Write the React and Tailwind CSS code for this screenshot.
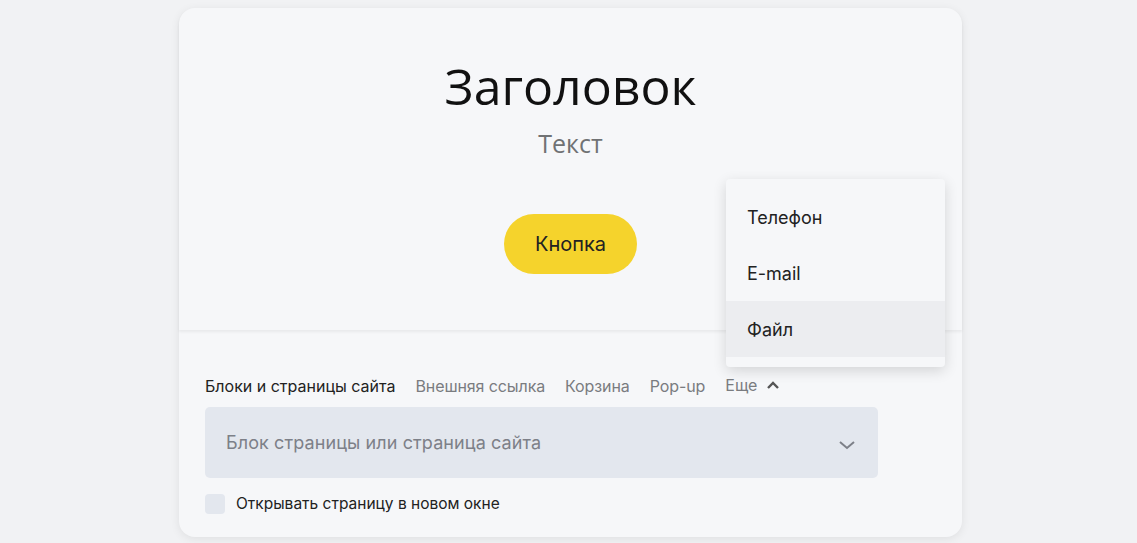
import React from 'react';

const tabs = ['Внешняя ссылка', 'Корзина', 'Pop-up'];
const menu = ['Телефон', 'E-mail', 'Файл'];

export default function App() {
  return (
    <div className="min-h-[543px] w-full bg-[#f1f2f4] pt-[8px] font-['Inter',sans-serif]">
      <div className="relative ml-[179px] w-[783px] rounded-[16px] bg-[#f6f7f9] shadow-[0_2px_10px_rgba(0,0,0,0.08)]">
        {/* preview */}
        <div className="flex h-[322px] flex-col items-center rounded-t-[16px] pt-[47px] shadow-[0_2px_3px_rgba(0,0,0,0.06)]">
          <h1 className="font-['Open_Sans',sans-serif] text-[50px] leading-[62px] text-[#111]">Заголовок</h1>
          <p className="mt-[10px] font-['Open_Sans',sans-serif] text-[25px] leading-[32px] text-[#707274]">Текст</p>
          <button className="mt-[55px] h-[60px] w-[133px] rounded-full bg-[#f5d32c] text-[20px] text-[#222]">Кнопка</button>
        </div>

        {/* link settings */}
        <div className="px-[26px] pt-[44px] pb-[22px]">
          <div className="flex items-center gap-[20px] text-[16px] leading-[24px] text-[#7a7c80]">
            <span className="text-[#222]">Блоки и страницы сайта</span>
            {tabs.map((t) => (
              <span key={t} className="tracking-[-0.1px]">{t}</span>
            ))}
            <span className="-mt-[2px] flex items-center gap-[9px]">
              Еще
              <svg width="14" height="10" viewBox="0 0 14 10" fill="none">
                <path d="M2 8l5-5 5 5" stroke="#555" strokeWidth="2.4" />
              </svg>
            </span>
          </div>
          <div className="mt-[9px] flex h-[71px] w-[673px] items-center justify-between rounded-[5px] bg-[#e3e7ee] px-[21px]">
            <span className="text-[18px] tracking-[0.1px] text-[#7d8088]">Блок страницы или страница сайта</span>
            <svg width="18" height="12" viewBox="0 0 18 12" fill="none" className="mr-[1px] mt-[4px]">
              <path d="M2 3l7 6 7-6" stroke="#7d8088" strokeWidth="2" />
            </svg>
          </div>
          <label className="mt-[14px] flex items-center gap-[11px]">
            <span className="h-[20px] w-[20px] rounded-[4px] bg-[#e3e7ee]" />
            <span className="text-[15.5px] text-[#222]">Открывать страницу в новом окне</span>
          </label>
        </div>

        {/* dropdown */}
        <div className="absolute left-[547px] top-[171px] w-[219px] rounded-[4px] bg-[#f6f7f9] pt-[10px] pb-[10px] shadow-[0_4px_14px_rgba(0,0,0,0.14)]">
          {menu.map((m, i) => (
            <div
              key={m}
              className={`flex h-[56px] items-center px-[21px] text-[18px] text-[#222] ${i === 2 ? 'bg-[#ecedf0]' : ''}`}
            >
              {m}
            </div>
          ))}
        </div>
      </div>
    </div>
  );
}
